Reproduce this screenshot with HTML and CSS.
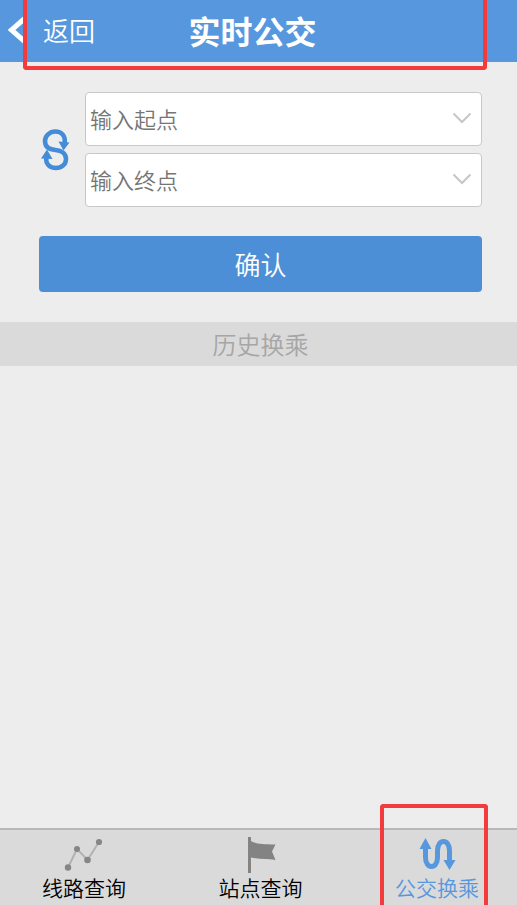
FILE: index.html
```html
<!DOCTYPE html>
<html lang="zh-CN">
<head>
<meta charset="utf-8">
<meta name="viewport" content="width=device-width, initial-scale=1">
<title>实时公交</title>
<link rel="stylesheet" href="styles.css">
</head>
<body>
<header class="topbar">
  <a class="back" href="#">
    <svg class="back-icon" width="20" height="32" viewBox="0 0 20 32" aria-hidden="true"><path d="M20 2.500 4.500 16 20 29.500" fill="none" stroke="#fff" stroke-width="5"/></svg>
    返回
  </a>
  <h1 class="title">实时公交</h1>
  <span class="marker marker-top"></span>
</header>

<main class="content">
  <form class="search">
    <div class="route">
      <button class="swap" type="button" aria-label="交换起点和终点">
        <svg width="30" height="44" viewBox="0 0 30 44" aria-hidden="true">
          <path d="M23.500 15C25 8 20.500 3.500 14.500 3.500C8.500 3.500 4 8 4 13C4 18.500 8 21.500 14.500 22C21 22.500 25 26 25 31C25 36.500 20.500 40 15 40C8.500 40 4 35.500 5.500 29" fill="none" stroke="#448bd8" stroke-width="4.500"/>
          <path d="M17.500 13.500 28.500 14.500 22.500 22.500ZM0 30.500 6 21.500 11.500 31Z" fill="#448bd8"/>
        </svg>
      </button>
      <div class="fields">
        <div class="field">
          <input class="field-input" type="text" placeholder="输入起点" aria-label="起点">
          <svg class="chevron" width="20" height="12" viewBox="0 0 20 12" aria-hidden="true"><path d="M1.500 1.500 10 10 18.500 1.500"/></svg>
        </div>
        <div class="field">
          <input class="field-input" type="text" placeholder="输入终点" aria-label="终点">
          <svg class="chevron" width="20" height="12" viewBox="0 0 20 12" aria-hidden="true"><path d="M1.500 1.500 10 10 18.500 1.500"/></svg>
        </div>
      </div>
    </div>
    <button class="confirm" type="button">确认</button>
  </form>
  <h2 class="history">历史换乘</h2>
</main>

<nav class="tabs">
  <a class="tab" href="#">
    <svg class="tab-icon" width="40" height="38" viewBox="0 0 40 38" aria-hidden="true">
      <path d="M4 31.500 13 13 23.500 24 35 6" fill="none" stroke="#b2b2b2" stroke-width="2"/>
      <g fill="#868686"><circle cx="4" cy="31.500" r="3.200"/><circle cx="13" cy="13" r="3"/><circle cx="23.500" cy="24" r="3.300"/><circle cx="35" cy="6" r="3.100"/></g>
    </svg>
    线路查询
  </a>
  <a class="tab" href="#">
    <svg class="tab-icon" width="40" height="38" viewBox="0 0 40 38" aria-hidden="true"><path d="M7 1h3v4C15 8 21 8 34.500 8.500L31 15.500 34.500 24C27 22.500 19 23.500 10 21.500V37H7Z" fill="#838383"/></svg>
    站点查询
  </a>
  <a class="tab tab-active" href="#" aria-current="page">
    <svg class="tab-icon" width="40" height="38" viewBox="0 0 40 38" aria-hidden="true">
      <path d="M8.500 11V21.500C8.500 33.500 20.500 33.500 20.500 21.500V14.500C20.500 2.500 32.500 2.500 32.500 14.500V25" fill="none" stroke="#5797dd" stroke-width="5"/>
      <path d="M8.500 2 14.500 13H2.500ZM26.500 24H38.500L32.500 34Z" fill="#5797dd"/>
    </svg>
    公交换乘
    <span class="marker marker-tab"></span>
  </a>
</nav>
</body>
</html>
```
FILE: styles.css
```css
* {
  box-sizing: border-box;
}

body {
  display: flex;
  flex-direction: column;
  min-height: 100vh;
  margin: 0;
  overflow-x: hidden;
  background: #ededed;
  color: #000;
  font-family: "Noto Sans CJK SC", sans-serif;
  font-weight: 350;
}

a {
  color: inherit;
  text-decoration: none;
}

button {
  border: 0;
  font: inherit;
  cursor: pointer;
}

.topbar {
  position: relative;
  display: grid;
  grid-template-columns: 1fr auto 1fr;
  align-items: center;
  height: 62px;
  padding: 0 19px 2px 7px;
  background: #5797dd;
  color: #fff;
}

.back {
  display: flex;
  align-items: center;
  gap: 16px;
  font-size: 26px;
  line-height: 32px;
}

.title {
  margin: 0;
  font-size: 32px;
  font-weight: 700;
  line-height: 40px;
}

.marker {
  position: absolute;
  border: 4px solid #f33b3b;
  pointer-events: none;
}

.marker-top {
  top: 0;
  right: 30px;
  bottom: -8px;
  left: 23px;
  border-top: 0;
  border-radius: 0 0 4px 4px;
}

.content {
  flex: 1;
}

.search {
  padding: 30px 35px 30px 39px;
}

.route {
  display: flex;
  align-items: center;
  gap: 14px;
}

.swap {
  display: flex;
  padding: 0 0 0 2px;
  background: none;
}

.fields {
  display: flex;
  flex: 1;
  flex-direction: column;
  gap: 7px;
}

.field {
  display: flex;
  align-items: center;
  height: 54px;
  padding: 0 9px 2px 4px;
  border: 1px solid #c8c8c8;
  border-radius: 4px;
  background: #fff;
}

.field-input {
  flex: 1;
  min-width: 0;
  padding: 0;
  border: 0;
  outline: 0;
  background: none;
  color: #333;
  font: inherit;
  font-size: 22px;
  line-height: 32px;
}

.field-input::placeholder {
  color: #757575;
  opacity: 1;
}

.chevron {
  fill: none;
  stroke: #c6c6c6;
  stroke-width: 2;
}

.confirm {
  display: block;
  width: 100%;
  height: 56px;
  margin-top: 29px;
  border-radius: 4px;
  background: #4d8fd7;
  color: #fff;
  font-size: 26px;
  line-height: 40px;
}

.history {
  margin: 0;
  padding-left: 4px;
  background: #dadada;
  color: #a6a6a6;
  font-size: 24px;
  font-weight: 350;
  line-height: 44px;
  text-align: center;
}

.tabs {
  display: flex;
  justify-content: space-between;
  padding: 6px 38px 5px 42px;
  border-top: 2px solid #b8b8b8;
  background: #dadada;
}

.tab {
  position: relative;
  display: flex;
  flex-direction: column;
  align-items: center;
  font-size: 21px;
  line-height: 26px;
}

.tab-active {
  color: #5797dd;
}

.marker-tab {
  top: -32px;
  right: -9px;
  bottom: -5px;
  left: -15px;
  border-bottom: 0;
  border-radius: 4px 4px 0 0;
}
```
